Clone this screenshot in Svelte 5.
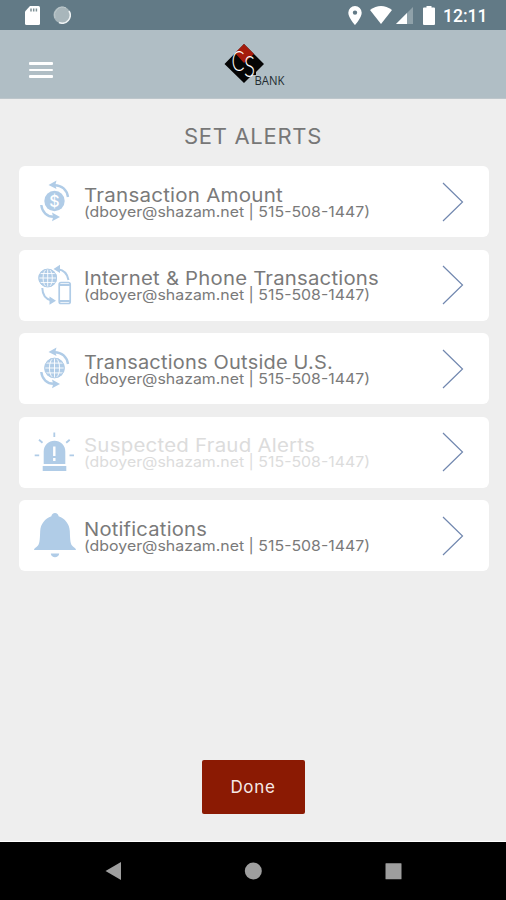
<script>
    const contact = '(dboyer@shazam.net | 515-508-1447)';

    // Width is the rendered length of each title
    const alerts = [
        { title: 'Transaction Amount', icon: 'amount', width: 199 },
        { title: 'Internet & Phone Transactions', icon: 'phone', width: 295 },
        { title: 'Transactions Outside U.S.', icon: 'globe', width: 249 },
        { title: 'Suspected Fraud Alerts', icon: 'siren', width: 231, disabled: true },
        { title: 'Notifications', icon: 'bell', width: 123 }
    ];
</script>

{#snippet globe(cx, cy, r)}
    <g transform="translate({cx} {cy})">
        <circle {r} fill="#b0cce7" />
        <g fill="none" stroke="#fff" stroke-width="0.9">
            <ellipse rx={r * 0.5} ry={r} />
            <path d="M0 {-r}V{r}M{-r} 0H{r}M{-r} {-r * 0.48}H{r}M{-r} {r * 0.48}H{r}" />
        </g>
        <circle r={r - 0.4} fill="none" stroke="#b0cce7" stroke-width="1" />
    </g>
{/snippet}

{#snippet arrows()}
    <path d="M22 6.2C30 6 35 11 36 18M22 37.8C15 38 10 33 9.3 26" fill="none" stroke="#b0cce7" stroke-width="2.4" />
    <path d="M16.5 6l8-4.5-1.2 4.5 1.2 4zM28 38l-8 4.2 1.2-4.2-1.2-4.4z" fill="#b0cce7" />
{/snippet}

<div class="screen">
    <div class="status">
        <svg class="sd" width="15" height="19" viewBox="0 0 15 19">
            <path d="M5 0h8.5Q15 0 15 1.5v16Q15 19 13.5 19h-12Q0 19 0 17.5V5.5z" fill="#fff" />
            <path d="M6 2.5v3M8.700 2.500v3M11.400 2.500v3" stroke="#7d9095" stroke-width="1.5" />
        </svg>
        <svg class="sync" width="18" height="18" viewBox="0 0 18 18">
            <circle cx="9" cy="9" r="8.5" fill="#a8b6bb" />
            <path d="M16 5A8 8 0 0 1 6 16.5" fill="none" stroke="#eef2f3" stroke-width="1.5" />
            <path d="M2 12A8 8 0 0 1 13 2" fill="none" stroke="#bdc9cc" />
        </svg>
        <div class="right">
            <svg width="14" height="19" viewBox="0 0 14 19">
                <path d="M7 0a6.7 6.7 0 0 0-6.7 6.7C.3 11.5 7 19 7 19s6.7-7.5 6.7-12.3A6.7 6.7 0 0 0 7 0zm0 4.4a2.2 2.2 0 1 1 0 4.4 2.2 2.2 0 0 1 0-4.4z" fill="#fff" />
            </svg>
            <svg class="wifi" width="22" height="18" viewBox="0 0 22 18">
                <path d="M0 4Q11-4 22 4L11 18z" fill="#fff" />
            </svg>
            <svg class="signal" width="17" height="17" viewBox="0 0 17 17">
                <path d="M17 0v17H0z" fill="#8fa1a9" />
                <path d="M11 6v11H0z" fill="#fff" />
            </svg>
            <svg class="battery" width="12" height="19" viewBox="0 0 12 19">
                <path d="M3.500 0h5v1.500H11q1 0 1 1V18q0 1-1 1H1q-1 0-1-1V2.500q0-1 1-1h2.500z" fill="#fff" />
            </svg>
            <span class="time">12:11</span>
        </div>
    </div>

    <header>
        <button class="menu" aria-label="Menu"><i></i><i></i><i></i></button>
        <svg class="logo" width="64" height="54" viewBox="0 0 64 54">
            <path d="M20 4L40 24 32 32V35H28L20 43 0.5 24z" fill="#050505" />
            <path d="M20 4l10 10-10 9-9-10z" fill="#a51b0c" />
            <text class="mark" x="7.500" y="30.500" font-size="28" textLength="13" lengthAdjust="spacingAndGlyphs">C</text>
            <text class="mark" x="20" y="36.500" font-size="29" textLength="11" lengthAdjust="spacingAndGlyphs">S</text>
            <text class="bank" x="30.5" y="45" textLength="30" lengthAdjust="spacingAndGlyphs">BANK</text>
        </svg>
    </header>

    <main>
        <h1>SET ALERTS</h1>
        <div class="list">
            {#each alerts as alert}
                <div class="card" class:disabled={alert.disabled}>
                    <svg class="icon" width="46" height="46" viewBox="0 0 46 46">
                        {#if alert.icon === 'amount'}
                            {@render arrows()}
                            <circle cx="22.5" cy="22" r="10.2" fill="#b0cce7" />
                            <text x="22.5" y="27.500" class="dollar">$</text>
                        {:else if alert.icon === 'phone'}
                            {@render globe(15.7, 15, 9.3)}
                            <path d="M26 6.2C32 7 35.5 11 36.5 17M10.3 25C10.5 32 14 36 19 37.3" fill="none" stroke="#b0cce7" stroke-width="2" />
                            <path d="M21.5 6l6.5-4.3v8.3zM24 37.7l-6.500 4v-8.200z" fill="#b0cce7" />
                            <rect x="27.2" y="19.5" width="11" height="21" rx="1.8" fill="#fff" stroke="#b0cce7" stroke-width="1.7" />
                            <path d="M27 22h11M27 38h11" stroke="#b0cce7" stroke-width="2" />
                        {:else if alert.icon === 'globe'}
                            {@render arrows()}
                            {@render globe(22.5, 22, 10.2)}
                        {:else if alert.icon === 'siren'}
                            <path d="M11.7 34V21.5a10.8 10.8 0 0 1 21.6 0V34zM10.7 36h23.6v5H10.7z" fill="#b0cce7" />
                            <path d="M22.3 16.5v9.5M22.3 28v3" stroke="#fff" stroke-width="2.4" />
                            <path d="M22.3 2.5v4.5M7 9.7l3.5 3M37.7 9.7l-3.5 3M2.700 25.300h4.500M37.500 25.300H42" stroke="#b0cce7" stroke-width="1.8" />
                        {:else}
                            <path d="M23 0c2 0 3.400 1.300 3.600 3.200C33 5.500 37.500 11 37.800 18c.3 6 .2 12 2.200 14.500 1.500 1.800 4 2.500 4 4.500H2c0-2 2.500-2.700 4-4.500 2-2.500 1.900-8.500 2.200-14.500.3-7 4.800-12.500 11.200-14.800C19.600 1.300 21 0 23 0zM18.800 40.500h8.400c-.5 5-7.900 5-8.400 0z" fill="#b0cce7" />
                        {/if}
                    </svg>
                    <svg class="label" width="340" height="44" viewBox="0 0 340 44">
                        <text class="title" x="0" y="21.500" textLength={alert.width} lengthAdjust="spacingAndGlyphs">{alert.title}</text>
                        <text class="contact" x="0" y="36.500" textLength="286" lengthAdjust="spacingAndGlyphs">{contact}</text>
                    </svg>
                    <svg class="chevron" width="22" height="42" viewBox="0 0 22 42">
                        <path d="M1 2L20.5 21 1 40" fill="none" stroke="#7187af" stroke-width="1.200" />
                    </svg>
                </div>
            {/each}
        </div>
        <button class="done">Done</button>
    </main>

    <nav>
        <svg width="506" height="58" viewBox="0 0 506 58" fill="#9e9e9e">
            <path d="M105.5 29L121 20v18z" />
            <circle cx="253.3" cy="29" r="8.5" />
            <rect x="385.5" y="21.3" width="16" height="16" rx="0.5" />
        </svg>
    </nav>
</div>

<style>
    :global(body) {
        margin: 0;
    }

    .screen {
        width: 506px;
        height: 900px;
        display: flex;
        flex-direction: column;
        background: #eee;
        font-family: Inter, "Liberation Sans", sans-serif;
        overflow: hidden;
    }

    .status {
        height: 30px;
        box-sizing: border-box;
        padding: 0 19px 0 25px;
        display: flex;
        align-items: center;
        background: #627a86;
    }

    .sync {
        margin-left: 13px;
    }

    .right {
        margin-left: auto;
        display: flex;
        align-items: center;
    }

    .wifi {
        margin-left: 8px;
    }

    .signal {
        margin-left: 4px;
    }

    .battery {
        margin-left: 10px;
    }

    .time {
        width: 44px;
        margin-left: 8px;
        padding-top: 2px;
        color: #fff;
        font: 500 17.5px Roboto, sans-serif;
        white-space: nowrap;
    }

    header {
        height: 69px;
        box-sizing: border-box;
        border-bottom: 1px solid #bdc6cb;
        padding: 10px 28.5px 0;
        display: flex;
        align-items: flex-start;
        background: #b0bec5;
    }

    .menu {
        width: 24px;
        margin: 22px 0 0;
        padding: 0;
        border: none;
        background: none;
        display: flex;
        flex-direction: column;
        gap: 4px;
    }

    .menu i {
        height: 2.7px;
        background: #fff;
        border-radius: 1px;
    }

    .logo {
        margin-left: 171px;
    }

    .mark {
        font-family: Lato, sans-serif;
        font-weight: 300;
        fill: #fff;
    }

    .bank {
        font: 500 13.5px "Open Sans", sans-serif;
        fill: #222b30;
    }

    main {
        flex: 1;
        display: flex;
        flex-direction: column;
        align-items: center;
        border-bottom: 1px solid #fff;
    }

    h1 {
        margin: 23px 0 0;
        height: 44px;
        color: #777;
        font-size: 22px;
        font-weight: 400;
        line-height: 28px;
        letter-spacing: 0.7px;
    }

    .list {
        width: 470px;
        margin-left: 1px;
        display: flex;
        flex-direction: column;
        gap: 12.5px;
    }

    .card {
        height: 71px;
        box-sizing: border-box;
        padding: 0 25px 0 13px;
        display: flex;
        align-items: center;
        background: #fff;
        border-radius: 6px;
    }

    .icon {
        flex: none;
        margin-top: 1px;
    }

    .dollar {
        font: 500 16px Inter, sans-serif;
        fill: #fff;
        text-anchor: middle;
    }

    .label {
        flex: none;
        margin-left: 6.5px;
    }

    .title {
        font-size: 18.5px;
        letter-spacing: 0.2px;
        fill: #7a7a7a;
    }

    .contact {
        font-size: 14.5px;
        fill: #7a7a7a;
    }

    .disabled .title,
    .disabled .contact {
        fill: #dcdcdc;
    }

    .chevron {
        flex: none;
        margin-left: auto;
    }

    .done {
        width: 103px;
        height: 54px;
        margin: 189px 0 0;
        padding: 0;
        border: none;
        border-radius: 2px;
        background: #8b1a03;
        color: #f6e9e6;
        font: 400 17px Inter, sans-serif;
        letter-spacing: 0.7px;
    }

    nav {
        height: 58px;
        background: #000;
    }
</style>
